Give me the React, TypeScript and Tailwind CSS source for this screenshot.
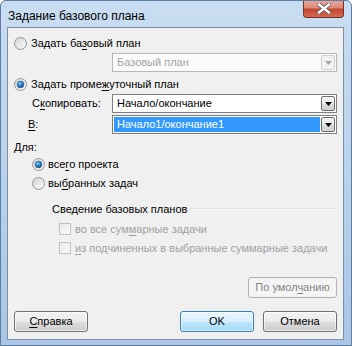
import React from "react";

const font = { fontFamily: '"Liberation Sans", Arial, sans-serif' };

function Radio({ checked, id }: { checked?: boolean; id: string }) {
  return (
    <svg width="13" height="13" viewBox="0 0 13 13" className="shrink-0">
      <defs>
        <linearGradient id={`rg-${id}`} x1="0" y1="0" x2="1" y2="1">
          <stop offset="0" stopColor="#d4d4d4" />
          <stop offset="1" stopColor="#fbfbfb" />
        </linearGradient>
        <radialGradient id={`rd-${id}`} cx="0.4" cy="0.35" r="0.7">
          <stop offset="0" stopColor="#8fd0f7" />
          <stop offset="0.5" stopColor="#2a7fc4" />
          <stop offset="1" stopColor="#124a7c" />
        </radialGradient>
      </defs>
      <circle cx="6.5" cy="6.5" r="6" fill={`url(#rg-${id})`} stroke="#979797" strokeWidth="1" />
      {checked && <circle cx="6.5" cy="6.5" r="3.4" fill={`url(#rd-${id})`} stroke="#2a5f8f" strokeWidth="0.6" />}
    </svg>
  );
}

function Checkbox() {
  return (
    <div className="w-[12px] h-[12px] shrink-0 border border-[#c2c2c2] bg-[linear-gradient(135deg,#e9e9e9,#fafafa)]" />
  );
}

function Arrow({ disabled }: { disabled?: boolean }) {
  return (
    <div
      className={
        "w-[14px] h-[15px] shrink-0 flex items-center justify-center rounded-[2px] border " +
        (disabled
          ? "border-[#d0d0d0] bg-[#f2f2f2]"
          : "border-[#707070] bg-[linear-gradient(to_bottom,#f3f3f3_0%,#ebebeb_50%,#dddddd_51%,#cfcfcf_100%)]")
      }
    >
      <svg width="7" height="4" viewBox="0 0 7 4">
        <polygon points="0,0 7,0 3.5,4" fill={disabled ? "#a5a5a5" : "#000"} />
      </svg>
    </div>
  );
}

function Combo({ text, disabled, selected }: { text: string; disabled?: boolean; selected?: boolean }) {
  return (
    <div
      className={
        "w-[225px] h-[19px] flex items-center border pl-[1px] pr-[1px] " +
        (disabled ? "border-[#b8b8b8] bg-[#fbfbfb]" : "border-[#7f7f7f] bg-white")
      }
    >
      <div
        className={
          "flex-1 h-[15px] flex items-center pl-[3px] mr-[1px] " +
          (selected ? "bg-[#3399ff] text-white" : disabled ? "text-[#a3a3a3]" : "text-black")
        }
      >
        {text}
      </div>
      <Arrow disabled={disabled} />
    </div>
  );
}

function Btn({
  children,
  w,
  kind,
}: {
  children: React.ReactNode;
  w: string;
  kind?: "default" | "disabled";
}) {
  const base = "h-[21px] flex items-center justify-center rounded-[3px] border ";
  const cls =
    kind === "default"
      ? "border-[#3c7fb1] bg-[linear-gradient(to_bottom,#eaf6fd_0%,#d9f0fc_50%,#bee6fd_51%,#a7d9f5_100%)] shadow-[inset_0_0_0_1px_#ffffff99]"
      : kind === "disabled"
      ? "border-[#adb2b5] bg-[#f4f4f4] text-[#838383]"
      : "border-[#707070] bg-[linear-gradient(to_bottom,#f2f2f2_0%,#ebebeb_50%,#dddddd_51%,#cfcfcf_100%)] shadow-[inset_0_0_0_1px_#ffffffaa]";
  return <div className={base + cls + " " + w}>{children}</div>;
}

const U = ({ c }: { c: string }) => <span className="underline underline-offset-[2px]">{c}</span>;

export default function App() {
  return (
    <div
      className="relative w-[352px] h-[346px] overflow-hidden rounded-t-[6px] border border-[#5f7d9e] bg-[linear-gradient(to_bottom,#c9ddf2_0%,#bcd4ee_40%,#a9c6e6_100%)] text-[11px] text-black"
      style={font}
    >
      {/* title bar */}
      <div className="h-[26px] flex items-center pl-[7px] pt-[3px] text-[12px] text-black">
        Задание базового плана
      </div>
      {/* close button */}
      <div className="absolute -top-px left-[302px] w-[41px] h-[18px] rounded-b-[4px] border border-t-0 border-[#7a2f25] bg-[linear-gradient(to_bottom,#e9ab9d_0%,#dc8a78_45%,#c3452f_55%,#d26a52_100%)] flex items-center justify-center">
        <svg width="14" height="11" viewBox="0 0 14 11">
          <path d="M2 1.5 L12 9.5 M12 1.5 L2 9.5" stroke="#5b5b5b" strokeWidth="4" strokeLinecap="square" />
          <path d="M2 1.5 L12 9.5 M12 1.5 L2 9.5" stroke="#ffffff" strokeWidth="2.4" strokeLinecap="square" />
        </svg>
      </div>
      {/* client */}
      <div className="ml-[6px] w-[337px] h-[313px] border border-[#7f8fa2] bg-[#f0f0f0] flex flex-col">
        <div className="pt-[7px] pl-[6px] h-[23px] flex items-end">
          <div className="h-[16px] flex items-center gap-[4px]">
            <Radio id="a" />
            <span>
              Задать ба<U c="з" />овый план
            </span>
          </div>
        </div>
        <div className="mt-[2px] ml-[104px]">
          <Combo text="Базовый план" disabled />
        </div>
        <div className="mt-[4px] pl-[6px] h-[16px] flex items-center gap-[4px]">
          <Radio id="b" checked />
          <span>
            Задать проме<U c="ж" />уточный план
          </span>
        </div>
        <div className="mt-[2px] flex items-center">
          <span className="w-[104px] pl-[24px]">
            С<U c="к" />опировать:
          </span>
          <Combo text="Начало/окончание" />
        </div>
        <div className="mt-[2px] flex items-center">
          <span className="w-[104px] pl-[20px]">
            <U c="В" />:
          </span>
          <Combo text="Начало1/окончание1" selected />
        </div>
        <div className="mt-[6px] pl-[6px] h-[14px] flex items-center">Для:</div>
        <div className="mt-[2px] pl-[24px] h-[16px] flex items-center gap-[3px]">
          <Radio id="c" checked />
          <span>
            все<U c="г" />о проекта
          </span>
        </div>
        <div className="mt-[3px] pl-[24px] h-[16px] flex items-center gap-[3px]">
          <Radio id="d" />
          <span>
            вы<U c="б" />ранных задач
          </span>
        </div>
        <div className="mt-[11px] pl-[44px] pr-[6px] h-[14px] flex items-center gap-[3px]">
          <span className="whitespace-nowrap">Сведение базовых планов</span>
          <div className="flex-1 h-[2px] border-t border-[#d5dfe5] border-b border-b-white" />
        </div>
        <div className="mt-[6px] pl-[51px] h-[14px] flex items-center gap-[4px] text-[#a0a0a0]">
          <Checkbox />
          <span>
            во все сум<U c="м" />арные задачи
          </span>
        </div>
        <div className="mt-[5px] pl-[51px] h-[14px] flex items-center gap-[4px] text-[#a0a0a0]">
          <Checkbox />
          <span>
            <U c="и" />з подчиненных в выбранные суммарные задачи
          </span>
        </div>
        <div className="mt-[22px] flex justify-end pr-[6px]">
          <Btn w="w-[89px] h-[19px]" kind="disabled">
            <span>
              По умол<U c="ч" />анию
            </span>
          </Btn>
        </div>
        <div className="mt-[13px] flex items-center pl-[6px]">
          <Btn w="w-[74px]">
            <span>
              <U c="С" />правка
            </span>
          </Btn>
          <div className="ml-[92px]">
            <Btn w="w-[74px]" kind="default">
              OK
            </Btn>
          </div>
          <div className="ml-[9px]">
            <Btn w="w-[74px]">Отмена</Btn>
          </div>
        </div>
      </div>
    </div>
  );
}
